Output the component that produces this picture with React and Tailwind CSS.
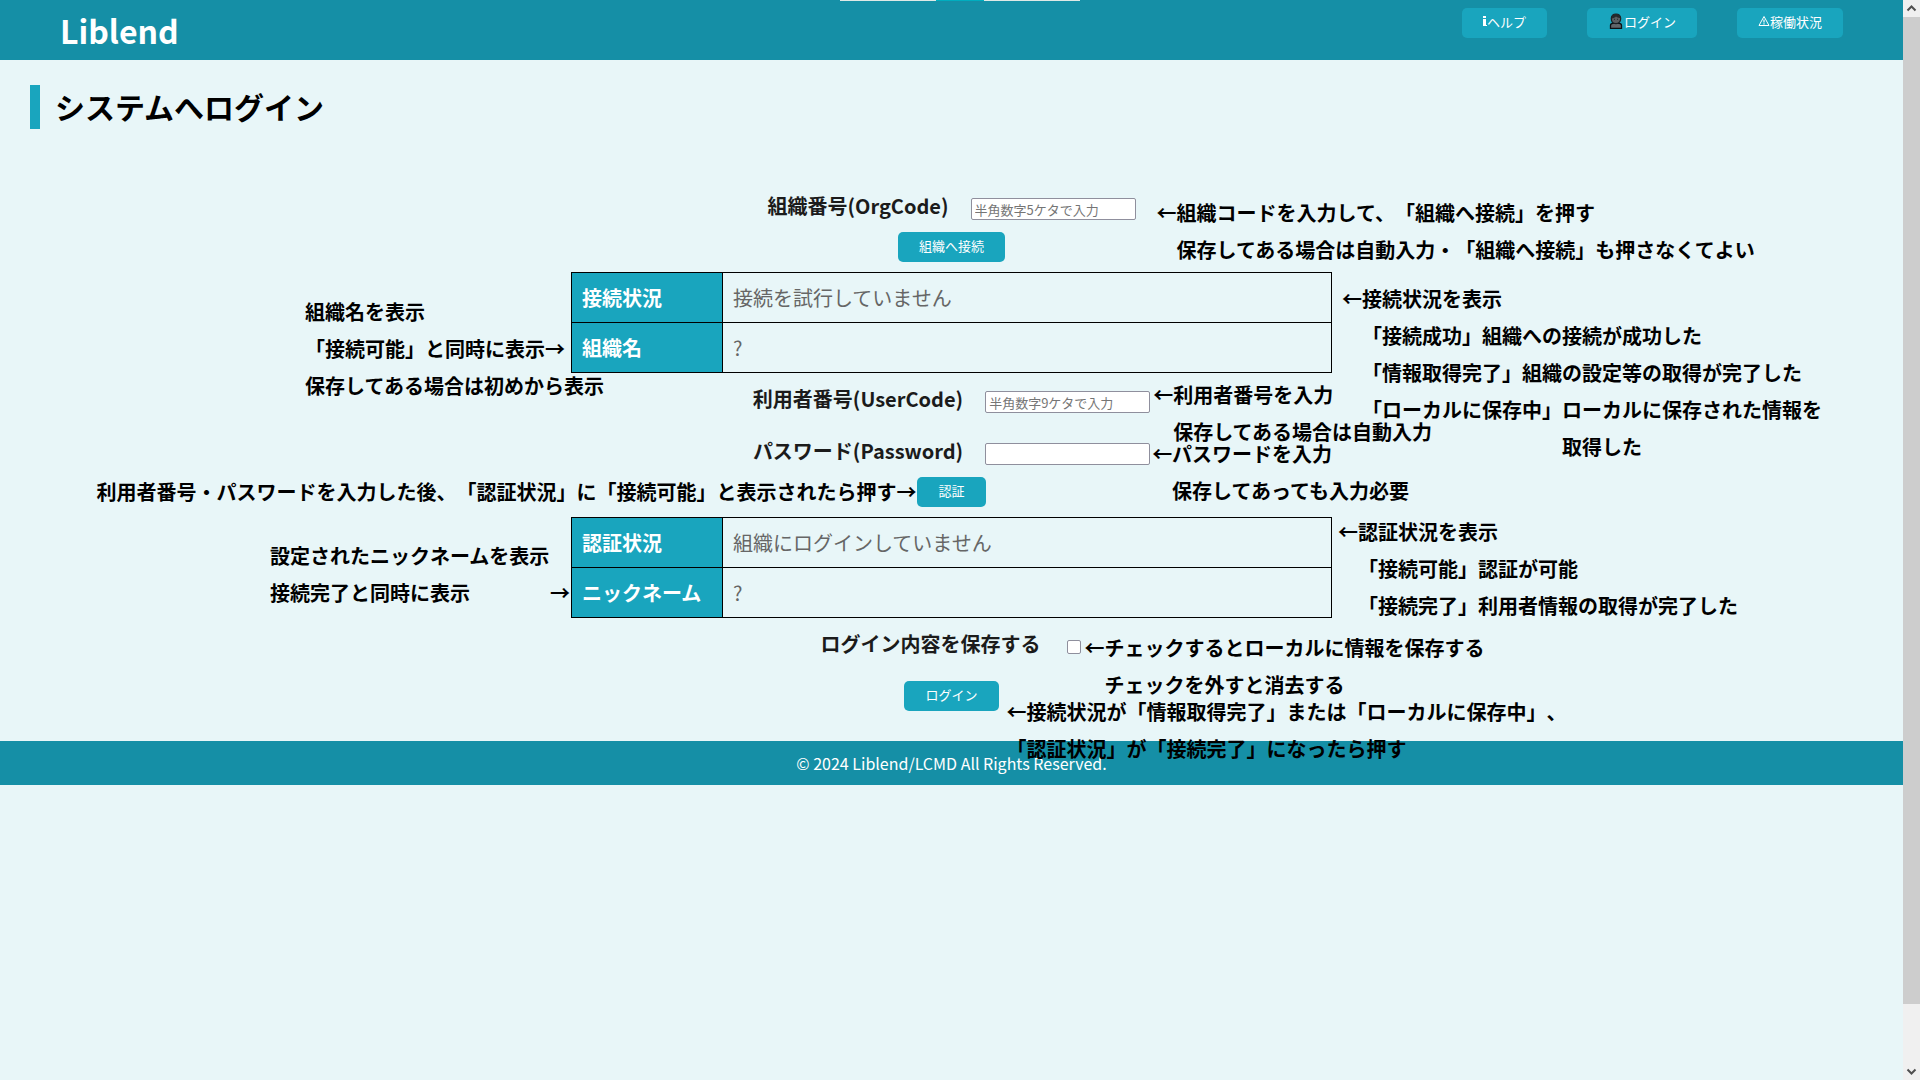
import React from "react";

function Note({ className, lines }) {
  return (
    <p className={"absolute z-10 whitespace-pre text-left text-[20px] leading-[37px] font-bold text-black [text-spacing-trim:space-all] " + className}>
      {lines.join("\n")}
    </p>
  );
}

function ActionButton({ children }) {
  return (
    <button type="button" className="flex h-[30px] items-center rounded-[5px] bg-[#19a5be] px-[21px] pb-1 text-[13px] leading-none text-white">
      {children}
    </button>
  );
}

function InfoIcon() {
  return (
    <svg width="4" height="12" viewBox="0 0 4 12" fill="#fff" aria-hidden="true">
      <path d="M0 1h3v2H0zM0 4h3v6h1v1H0z" />
    </svg>
  );
}

function PersonIcon() {
  return (
    <svg width="16" height="16" viewBox="0 0 16 16" aria-hidden="true">
      <path d="M2.5 15.3v-2.800c0-1.300 1-2.200 2.300-2.200h6.400c1.300 0 2.300.9 2.300 2.200v2.800z" fill="#60666a" stroke="#0c1114" strokeWidth="1.300" />
      <path d="M8 1c-2.800 0-4.700 1.700-4.700 4.500S5 10.600 8 10.600s4.700-2.300 4.700-5.100S10.800 1 8 1z" fill="#5a5f62" stroke="#1b2024" strokeWidth="1.200" />
      <path d="M3.500 5.500C3.500 2.500 5.500 1 8 1s4.500 1.500 4.500 4C10.500 5.200 9 4.600 8 3.600 7 4.800 5.500 5.400 3.500 5.500z" fill="#24292c" />
      <path d="M6 6.300h1M9 6.300h1" stroke="#24292c" />
    </svg>
  );
}

function WarningIcon() {
  return (
    <svg width="12" height="12" viewBox="0 0 12 12" fill="none" stroke="#fff" aria-hidden="true">
      <path d="M6 1.500 11 10.500H1z" />
      <path d="M6 4.500v3M6 8.300v1.200" strokeWidth="1.200" />
    </svg>
  );
}

function Field({ id, label, type, placeholder, note, noteClass }) {
  return (
    <div className="relative flex h-[52px] items-center gap-[22px]">
      <label htmlFor={id} className="text-[20px] font-bold text-[#1b1b1b]">{label}</label>
      <input
        id={id}
        type={type}
        placeholder={placeholder}
        className="mt-[6px] h-[22px] w-[165px] rounded-[2px] border border-[#8f8f9d] bg-white px-[3px] text-[13px] text-black placeholder:text-[#757575]"
      />
      <Note lines={note} className={noteClass} />
    </div>
  );
}

function StatusTable({ rows, left, leftClass, right, rightClass }) {
  return (
    <div className="relative mx-auto w-2/5">
      <Note lines={left} className={leftClass} />
      <table className="w-full table-fixed border-collapse text-left text-[20px] leading-[30px]">
        <tbody>
          {rows.map(([name, value]) => (
            <tr key={name} className="h-[50px]">
              <th scope="row" className="w-[151px] border border-black bg-[#19a5be] px-[10px] font-bold whitespace-nowrap text-white">{name}</th>
              <td className="border border-black px-[10px] text-[#666]">{value}</td>
            </tr>
          ))}
        </tbody>
      </table>
      <Note lines={right} className={rightClass} />
    </div>
  );
}

function Scrollbar() {
  return (
    <div className="sticky top-0 flex h-screen w-[17px] shrink-0 flex-col bg-[#f0f0f0]" aria-hidden="true">
      <svg width="17" height="17" viewBox="0 0 17 17" fill="none" stroke="#505050" strokeWidth="2">
        <path d="M4.500 10.500l4-4 4 4" />
      </svg>
      <div className="grow-[987] bg-[#cdcdcd]" />
      <div className="grow-[59]" />
      <svg width="17" height="17" viewBox="0 0 17 17" fill="none" stroke="#505050" strokeWidth="2">
        <path d="M4.500 6.500l4 4 4-4" />
      </svg>
    </div>
  );
}

export default function App() {
  return (
    <div className="relative flex min-h-screen bg-[#e8f6f8] font-['Noto_Sans_CJK_JP',sans-serif]" lang="ja">
      <div className="absolute inset-x-0 top-0 z-20 flex h-px justify-center" aria-hidden="true">
        <div className="w-24 bg-[#dfe9e6]" />
        <div className="w-12 bg-[#00adbf]" />
        <div className="w-24 bg-[#dfe9e6]" />
      </div>
      <div className="min-w-0 flex-1">
        <header className="flex h-[60px] items-start justify-between bg-[#158fa6] pr-[60px] pl-[60px]">
          <a href="#" className="text-[32px] leading-[60px] font-bold text-white">Liblend</a>
          <nav className="flex gap-10 pt-2">
            <ActionButton><InfoIcon />ヘルプ</ActionButton>
            <ActionButton><PersonIcon />ログイン</ActionButton>
            <ActionButton><WarningIcon />稼働状況</ActionButton>
          </nav>
        </header>
        <main>
          <h1 className="mt-[25px] ml-[30px] border-l-[10px] border-[#19a5be] pb-[2px] pl-[15px] text-[30px] leading-[42px] font-bold text-black">システムへログイン</h1>
          <form className="flex flex-col items-center pt-[51px] pb-[30px]">
            <Field
              id="org"
              label="組織番号(OrgCode)"
              type="text"
              placeholder="半角数字5ケタで入力"
              note={["←組織コードを入力して、「組織へ接続」を押す", "　保存してある場合は自動入力・「組織へ接続」も押さなくてよい"]}
              noteClass="top-[14px] left-full ml-[21px]"
            />
            <ActionButton>組織へ接続</ActionButton>
            <div className="mt-[10px] w-full">
              <StatusTable
                rows={[["接続状況", "接続を試行していません"], ["組織名", "?"]]}
                left={["組織名を表示", "「接続可能」と同時に表示→", "保存してある場合は初めから表示"]}
                leftClass="top-[21px] right-full -mr-[33px]"
                right={["←接続状況を表示", "　「接続成功」組織への接続が成功した", "　「情報取得完了」組織の設定等の取得が完了した", "　「ローカルに保存中」ローカルに保存された情報を", "　　　　　　　　　　　取得した"]}
                rightClass="top-[8px] left-full ml-[10px]"
              />
            </div>
            <Field
              id="user"
              label="利用者番号(UserCode)"
              type="text"
              placeholder="半角数字9ケタで入力"
              note={["←利用者番号を入力", "　保存してある場合は自動入力"]}
              noteClass="top-[3px] left-full ml-[3px]"
            />
            <Field
              id="password"
              label="パスワード(Password)"
              type="password"
              note={["←パスワードを入力", "　保存してあっても入力必要"]}
              noteClass="top-[10px] left-full ml-[2px]"
            />
            <div className="relative">
              <Note lines={["利用者番号・パスワードを入力した後、「認証状況」に「接続可能」と表示されたら押す→"]} className="-top-1 right-full mr-px" />
              <ActionButton>認証</ActionButton>
            </div>
            <div className="mt-[10px] w-full">
              <StatusTable
                rows={[["認証状況", "組織にログインしていません"], ["ニックネーム", "?"]]}
                left={["設定されたニックネームを表示", "接続完了と同時に表示　　　　→"]}
                leftClass="top-[20px] right-full mr-px"
                right={["←認証状況を表示", "　「接続可能」認証が可能", "　「接続完了」利用者情報の取得が完了した"]}
                rightClass="-top-1 left-full ml-[6px]"
              />
            </div>
            <div className="relative mr-[2px] flex h-[52px] items-center gap-[26px]">
              <label htmlFor="save" className="text-[20px] font-bold text-[#1b1b1b]">ログイン内容を保存する</label>
              <input id="save" type="checkbox" className="mt-[6px] size-[14px] appearance-none rounded-[2px] border border-[#8f8f9d] bg-white checked:bg-[#19a5be]" />
              <Note lines={["←チェックするとローカルに情報を保存する", "　チェックを外すと消去する"]} className="top-[11px] left-full ml-1" />
            </div>
            <div className="relative mt-[11px]">
              <ActionButton>ログイン</ActionButton>
              <Note lines={["←接続状況が「情報取得完了」または「ローカルに保存中」、", "「認証状況」が「接続完了」になったら押す"]} className="top-[12px] left-full ml-2" />
            </div>
          </form>
        </main>
        <footer className="bg-[#158fa6] text-center text-[16px] leading-[44px] text-white">© 2024 Liblend/LCMD All Rights Reserved.</footer>
      </div>
      <Scrollbar />
    </div>
  );
}
